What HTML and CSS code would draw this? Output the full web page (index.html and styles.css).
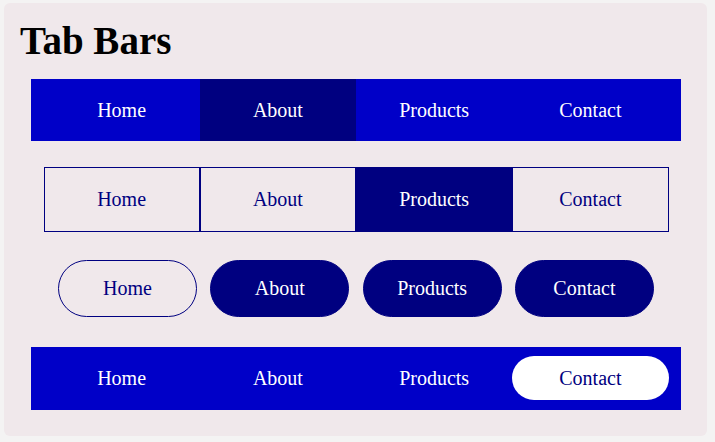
FILE: index.html
```html
<!DOCTYPE html>
<html>
<head>
<meta charset="utf-8">
<link rel="stylesheet" href="styles.css">
</head>
<body>
<div class="card">
  <h1 class="title">Tab Bars</h1>
  <nav class="bar bar-solid">
    <span class="tab">Home</span>
    <span class="tab active">About</span>
    <span class="tab">Products</span>
    <span class="tab">Contact</span>
  </nav>
  <nav class="bar bar-outline">
    <span class="tab">Home</span>
    <span class="tab">About</span>
    <span class="tab active">Products</span>
    <span class="tab">Contact</span>
  </nav>
  <nav class="bar bar-pills">
    <span class="tab active">Home</span>
    <span class="tab">About</span>
    <span class="tab">Products</span>
    <span class="tab">Contact</span>
  </nav>
  <nav class="bar bar-inset">
    <span class="tab">Home</span>
    <span class="tab">About</span>
    <span class="tab">Products</span>
    <span class="tab active">Contact</span>
  </nav>
</div>
</body>
</html>
```
FILE: styles.css
```css
html, body {
  margin: 0;
  padding: 0;
  background: #f4f3f3;
  font-family: "Liberation Serif", "Times New Roman", serif;
}
body {
  padding: 3px 8px 6px 4px;
}
.card {
  width: 703px;
  height: 433px;
  box-sizing: border-box;
  background: #f0e8eb;
  border-radius: 6px;
  padding: 16px 26px 0 27px;
}
.title {
  margin: 0 0 0 -11px;
  font-family: "Liberation Serif", "Times New Roman", serif;
  font-size: 39px;
  line-height: 44px;
  font-weight: bold;
  color: #000;
}
.bar {
  display: flex;
  font-family: "Liberation Serif", "Times New Roman", serif;
  font-size: 20px;
}
.tab {
  display: flex;
  align-items: center;
  justify-content: center;
  box-sizing: border-box;
  font-family: "Liberation Serif", "Times New Roman", serif;
}
.bar-solid {
  margin-top: 16px;
  height: 62px;
  background: #0000c8;
  padding: 0 12.5px;
}
.bar-solid .tab {
  flex: 1;
  color: #fff;
}
.bar-solid .tab.active {
  background: #000080;
}
.bar-outline {
  margin: 26px 12.5px 0;
  height: 65px;
}
.bar-outline .tab {
  flex: 1;
  border: 1px solid #000080;
  color: #000080;
}
.bar-outline .tab.active {
  background: #000080;
  color: #fff;
}
.bar-pills {
  margin-top: 28px;
  justify-content: center;
  gap: 13.3px;
}
.bar-pills .tab {
  width: 139px;
  height: 57px;
  border-radius: 29px;
  border: 1px solid #000080;
  background: #000080;
  color: #fff;
}
.bar-pills .tab.active {
  background: transparent;
  color: #000080;
}
.bar-inset {
  margin-top: 30px;
  height: 63px;
  box-sizing: border-box;
  background: #0000c8;
  padding: 9px 12.5px 10px;
}
.bar-inset .tab {
  flex: 1;
  color: #fff;
  border-radius: 22px;
}
.bar-inset .tab.active {
  background: #fff;
  color: #000080;
}
```
